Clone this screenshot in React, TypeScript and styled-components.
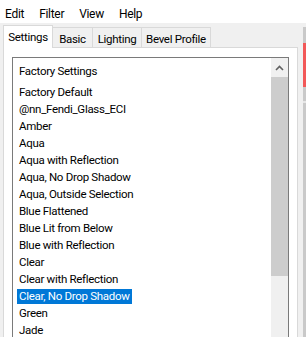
import styled, { createGlobalStyle } from "styled-components";

const GlobalStyle = createGlobalStyle`
  body {
    margin: 0;
    background: #f0f0f0;
    font-family: Roboto, "Noto Sans", sans-serif;
    font-size: 11.5px;
    letter-spacing: -0.3px;
    color: #000;
  }
`;

const Window = styled.div`
  width: 306px;
  height: 337px;
  display: flex;
  flex-direction: column;
  overflow: hidden;
  background: #f0f0f0;
`;

const MenuBar = styled.div`
  height: 23px;
  box-sizing: border-box;
  padding: 5px 0 0 5px;
  display: flex;
  gap: 15px;
  background: #fff;
  font-size: 12px;
  line-height: 18px;
`;

const Content = styled.div`
  flex: 1;
  display: flex;
  min-height: 0;
`;

const Main = styled.div`
  flex: 1;
  display: flex;
  flex-direction: column;
  padding: 0 5px 0 3px;
  min-width: 0;
`;

const Edge = styled.div`
  width: 3px;
  display: flex;
  flex-direction: column;
  background: #c9c9c9;
`;

const EdgePart = styled.div<{ $h: number; $color: string }>`
  height: ${(p) => p.$h}px;
  background: ${(p) => p.$color};
`;

const TabStrip = styled.div`
  height: 24px;
  display: flex;
  align-items: flex-end;
  position: relative;
  z-index: 1;
`;

const Tab = styled.div<{ $w: number; $active?: boolean }>`
  width: ${(p) => p.$w}px;
  height: ${(p) => (p.$active ? 23 : 20)}px;
  margin-bottom: ${(p) => (p.$active ? -1 : 0)}px;
  margin-right: -1px;
  box-sizing: border-box;
  border: 1px solid #d9d9d9;
  border-bottom: none;
  background: ${(p) => (p.$active ? "#fff" : "#f0f0f0")};
  display: flex;
  align-items: center;
  justify-content: center;
  padding-top: ${(p) => (p.$active ? 0 : 2)}px;
  white-space: nowrap;
`;

const Panel = styled.div`
  flex: 1;
  display: flex;
  min-height: 0;
  background: #fff;
  border: 1px solid #d9d9d9;
  border-bottom: none;
  padding: 9px 8px 0 8px;
`;

const ListBox = styled.div`
  flex: 1;
  display: flex;
  border: 1px solid #7a7a7a;
  border-bottom: none;
  background: #fff;
  min-width: 0;
`;

const List = styled.div`
  flex: 1;
  padding-top: 5px;
  min-width: 0;
`;

const Header = styled.div`
  height: 17px;
  line-height: 17px;
  padding-left: 6px;
  margin-bottom: 4px;
  white-space: nowrap;
`;

const Item = styled.div`
  height: 17px;
  display: flex;
  align-items: center;
  padding-left: 4px;
  white-space: nowrap;
`;

const ItemText = styled.span<{ $selected?: boolean }>`
  padding: 0 2px;
  line-height: 15px;
  background: ${(p) => (p.$selected ? "#0078d7" : "transparent")};
  color: ${(p) => (p.$selected ? "#fff" : "#000")};
`;

const ScrollBar = styled.div`
  width: 17px;
  display: flex;
  flex-direction: column;
  background: #f0f0f0;
`;

const ArrowButton = styled.div`
  height: 19px;
  display: flex;
  align-items: center;
  justify-content: center;
`;

const Thumb = styled.div`
  height: 199px;
  background: #cdcdcd;
`;

const menus = ["Edit", "Filter", "View", "Help"];

const tabs = [
  { label: "Settings", w: 50, active: true },
  { label: "Basic", w: 41 },
  { label: "Lighting", w: 50 },
  { label: "Bevel Profile", w: 70 },
];

const presets = [
  "Factory Default",
  "@nn_Fendi_Glass_ECI",
  "Amber",
  "Aqua",
  "Aqua with Reflection",
  "Aqua, No Drop Shadow",
  "Aqua, Outside Selection",
  "Blue Flattened",
  "Blue Lit from Below",
  "Blue with Reflection",
  "Clear",
  "Clear with Reflection",
  "Clear, No Drop Shadow",
  "Green",
  "Jade",
];

const selected = "Clear, No Drop Shadow";

function App() {
  return (
    <>
      <GlobalStyle />
      <Window>
        <MenuBar>
          {menus.map((m) => (
            <span key={m}>{m}</span>
          ))}
        </MenuBar>
        <Content>
          <Main>
            <TabStrip>
              {tabs.map((t) => (
                <Tab key={t.label} $w={t.w} $active={t.active}>
                  {t.label}
                </Tab>
              ))}
            </TabStrip>
            <Panel>
              <ListBox>
                <List>
                  <Header>Factory Settings</Header>
                  {presets.map((p) => (
                    <Item key={p}>
                      <ItemText $selected={p === selected}>{p}</ItemText>
                    </Item>
                  ))}
                </List>
                <ScrollBar>
                  <ArrowButton>
                    <svg width="9" height="6" viewBox="0 0 9 6">
                      <path d="M1 5 L4.5 1.5 L8 5" fill="none" stroke="#606060" strokeWidth="1.6" />
                    </svg>
                  </ArrowButton>
                  <Thumb />
                </ScrollBar>
              </ListBox>
            </Panel>
          </Main>
          <Edge>
            <EdgePart $h={4} $color="#f0f0f0" />
            <EdgePart $h={16} $color="#c9c9c9" />
            <EdgePart $h={44} $color="#f25858" />
            <EdgePart $h={14} $color="#c9c9c9" />
            <EdgePart $h={2} $color="#e6e6e6" />
          </Edge>
        </Content>
      </Window>
    </>
  );
}

export default App;
